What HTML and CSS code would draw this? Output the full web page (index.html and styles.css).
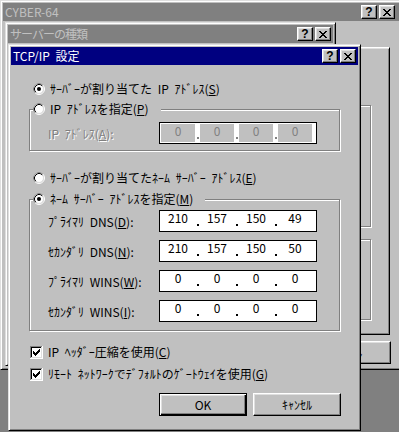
FILE: index.html
```html
<!DOCTYPE html>
<html lang="ja">
<head>
<meta charset="utf-8">
<title>TCP/IP 設定</title>
<link rel="stylesheet" href="styles.css">
</head>
<body>
<svg class="defs" aria-hidden="true">
  <symbol id="i-radio" viewBox="0 0 12 12">
    <circle cx="6" cy="6" r="5.5" fill="none" stroke="#fff"/>
    <path d="M2.11 9.89A5.5 5.5 0 0 1 9.89 2.11" fill="none" stroke="#808080"/>
    <circle cx="6" cy="6" r="4.5" fill="#fff" stroke="#dfdfdf"/>
    <path d="M2.82 9.18A4.5 4.5 0 0 1 9.18 2.82" fill="none" stroke="#000"/>
  </symbol>
  <symbol id="i-dot" viewBox="0 0 12 12"><circle cx="6" cy="6" r="2" fill="#000"/></symbol>
  <symbol id="i-chk" viewBox="0 0 13 13" shape-rendering="crispEdges">
    <rect width="13" height="13" fill="#fff"/>
    <path d="M0 0h12v1H1v11H0z" fill="#808080"/>
    <path d="M1 1h10v1H2v9H1z" fill="#000"/>
    <path d="M12 0h1v13H0v-1h12z" fill="#fff"/>
    <path d="M11 1h1v11H1v-1h10z" fill="#dfdfdf"/>
    <path d="M3 5h1v3H3zM4 6h1v3H4zM5 7h1v3H5zM6 6h1v3H6zM7 5h1v3H7zM8 4h1v3H8zM9 3h1v3H9z" fill="#000"/>
  </symbol>
  <symbol id="i-x" viewBox="0 0 8 7" shape-rendering="crispEdges">
    <path d="M0 0h2v1H0zM6 0h2v1H6zM1 1h2v1H1zM5 1h2v1H5zM2 2h4v1H2zM3 3h2v1H3zM2 4h4v1H2zM1 5h2v1H1zM5 5h2v1H5zM0 6h2v1H0zM6 6h2v1H6z" fill="#000"/>
  </symbol>
</svg>

<section class="win win-main">
  <div class="titlebar">
    <span class="title">CYBER-64</span>
    <div class="tbtns"><span class="tbtn">?</span><span class="tbtn"><svg class="xi"><use href="#i-x"/></svg></span></div>
  </div>
  <div class="main-body">
    <div class="sheet">
      <div class="etch sheet-g1"></div>
      <div class="etch sheet-g2"></div>
    </div>
    <button class="btn main-cancel">ｷｬﾝｾﾙ</button>
  </div>
</section>

<section class="win win-type">
  <div class="titlebar">
    <span class="title title-type">サーバーの種類</span>
    <div class="tbtns"><span class="tbtn">?</span><span class="tbtn"><svg class="xi"><use href="#i-x"/></svg></span></div>
  </div>
</section>

<section class="win win-tcp">
  <div class="titlebar active">
    <span class="title">TCP/IP 設定</span>
    <div class="tbtns"><span class="tbtn">?</span><span class="tbtn"><svg class="xi"><use href="#i-x"/></svg></span></div>
  </div>
  <div class="client">
    <div class="opt opt-1"><svg class="radio"><use href="#i-radio"/><use href="#i-dot"/></svg><span>ｻｰﾊﾞｰが割り当てた IP ｱﾄﾞﾚｽ(<u>S</u>)</span></div>

    <div class="group etch group-ip">
      <div class="legend"><svg class="radio"><use href="#i-radio"/></svg><span>IP ｱﾄﾞﾚｽを指定(<u>P</u>)</span></div>
      <div class="field-row">
        <span class="label off">IP ｱﾄﾞﾚｽ(<u>A</u>):</span>
        <div class="ip ip-off"><span class="oct">0</span><span class="dot"></span><span class="oct">0</span><span class="dot"></span><span class="oct">0</span><span class="dot"></span><span class="oct">0</span></div>
      </div>
    </div>

    <div class="opt opt-3"><svg class="radio"><use href="#i-radio"/></svg><span>ｻｰﾊﾞｰが割り当てたﾈｰﾑ ｻｰﾊﾞｰ ｱﾄﾞﾚｽ(<u>E</u>)</span></div>

    <div class="group etch group-ns">
      <div class="legend"><svg class="radio"><use href="#i-radio"/><use href="#i-dot"/></svg><span>ﾈｰﾑ ｻｰﾊﾞｰ ｱﾄﾞﾚｽを指定(<u>M</u>)</span></div>
      <div class="field-row">
        <span class="label">ﾌﾟﾗｲﾏﾘ DNS(<u>D</u>):</span>
        <div class="ip"><span class="oct">210</span><span class="dot"></span><span class="oct">157</span><span class="dot"></span><span class="oct">150</span><span class="dot"></span><span class="oct">49</span></div>
      </div>
      <div class="field-row">
        <span class="label">ｾｶﾝﾀﾞﾘ DNS(<u>N</u>):</span>
        <div class="ip"><span class="oct">210</span><span class="dot"></span><span class="oct">157</span><span class="dot"></span><span class="oct">150</span><span class="dot"></span><span class="oct">50</span></div>
      </div>
      <div class="field-row">
        <span class="label">ﾌﾟﾗｲﾏﾘ WINS(<u>W</u>):</span>
        <div class="ip"><span class="oct">0</span><span class="dot"></span><span class="oct">0</span><span class="dot"></span><span class="oct">0</span><span class="dot"></span><span class="oct">0</span></div>
      </div>
      <div class="field-row">
        <span class="label">ｾｶﾝﾀﾞﾘ WINS(<u>I</u>):</span>
        <div class="ip"><span class="oct">0</span><span class="dot"></span><span class="oct">0</span><span class="dot"></span><span class="oct">0</span><span class="dot"></span><span class="oct">0</span></div>
      </div>
    </div>

    <div class="chk-row chk-1"><svg class="chk"><use href="#i-chk"/></svg><span>IP ﾍｯﾀﾞｰ圧縮を使用(<u>C</u>)</span></div>
    <div class="chk-row chk-2"><svg class="chk"><use href="#i-chk"/></svg><span>ﾘﾓｰﾄ ﾈｯﾄﾜｰｸでﾃﾞﾌｫﾙﾄのｹﾞｰﾄｳｪｲを使用(<u>G</u>)</span></div>

    <div class="buttons">
      <button class="btn btn-default">OK</button>
      <button class="btn">ｷｬﾝｾﾙ</button>
    </div>
  </div>
</section>
</body>
</html>
```

FILE: styles.css
```css
* { box-sizing: border-box; }
html, body { margin: 0; padding: 0; }
body {
  position: relative;
  width: 399px;
  height: 432px;
  overflow: hidden;
  background: #808080;
  font: 12px "Noto Sans CJK JP", "Noto Sans", sans-serif;
  word-spacing: 3px;
  color: #000;
}
.defs { position: absolute; width: 0; height: 0; overflow: hidden; }

u { text-decoration: underline; text-underline-offset: 1px; text-decoration-thickness: 1px; }

/* windows */
.win {
  position: absolute;
  display: flex;
  flex-direction: column;
  background: #c0c0c0;
  border: 1px solid;
  border-color: #dfdfdf #000 #000 #dfdfdf;
  box-shadow: inset 1px 1px #fff, inset -1px -1px #808080;
  padding: 2px;
}
.win-main { left: 0; top: 0; width: 404px; height: 370px; }
.win-type { left: 5px; top: 22px; width: 331px; height: 344px; }
.win-tcp { left: 8px; top: 44px; width: 353px; height: 387px; }

.titlebar {
  flex: none;
  height: 18px;
  display: flex;
  align-items: center;
  padding-left: 2px;
  background: #808080;
  color: #c0c0c0;
  white-space: nowrap;
}
.titlebar.active { background: #000080; color: #fff; }
.title { line-height: 16px; }
.title-type { letter-spacing: -1px; }
.tbtns { margin-left: auto; margin-right: 2px; display: flex; gap: 2px; }
.win-main .tbtns { margin-right: 6px; }
.tbtn {
  width: 16px;
  height: 14px;
  display: flex;
  align-items: center;
  justify-content: center;
  background: #c0c0c0;
  border: 1px solid;
  border-color: #fff #000 #000 #fff;
  box-shadow: inset -1px -1px #808080, inset 1px 1px #dfdfdf;
  color: #000;
  font: bold 12px/12px "Liberation Sans", sans-serif;
}
.xi { display: block; width: 8px; height: 7px; }

/* background window body */
.main-body { flex: 1; display: flex; flex-direction: column; }
.sheet {
  margin: 26px 11px 0 5px;
  height: 288px;
  border: 1px solid;
  border-color: #fff #000 #000 #fff;
  box-shadow: inset 1px 1px #dfdfdf, inset -1px -1px #808080;
  padding: 57px 18px 0 0;
}
.etch {
  border: 1px solid #808080;
  box-shadow: inset 1px 1px #fff, 1px 1px #fff;
}
.sheet-g1 { height: 122px; }
.sheet-g2 { margin-top: 12px; height: 81px; }
.main-cancel { align-self: flex-end; margin: 6px 10px 0 0; width: 62px; }

/* buttons */
.btn {
  height: 23px;
  width: 88px;
  padding: 0;
  background: #c0c0c0;
  border: 1px solid;
  border-color: #fff #000 #000 #fff;
  box-shadow: inset -1px -1px #808080, inset 1px 1px #dfdfdf;
  font: 12px "Noto Sans CJK JP", sans-serif;
  color: #000;
  line-height: 19px;
}
.btn-default {
  border-color: #000;
  box-shadow: inset 1px 1px #fff, inset -1px -1px #000, inset -2px -2px #808080, inset 2px 2px #dfdfdf;
}

/* dialog client */
.client { flex: 1; display: flex; flex-direction: column; padding: 0 18px; }
.opt, .chk-row, .legend {
  display: flex;
  align-items: center;
  gap: 5px;
  height: 16px;
  line-height: 16px;
  white-space: nowrap;
}
.opt { padding-left: 4px; }
.opt-1 { margin-top: 16px; }
.opt-3 { margin-top: 19px; }
.radio { display: block; flex: none; width: 12px; height: 12px; }
.chk { display: block; flex: none; width: 13px; height: 13px; }

.group { position: relative; }
.group-ip { margin-top: 12px; height: 42px; padding: 12px 0 0 18px; }
.group-ns {
  margin-top: 13px;
  height: 132px;
  padding: 10px 0 0 18px;
  display: flex;
  flex-direction: column;
  gap: 8px;
}
.legend {
  position: absolute;
  left: 3px;
  top: -9px;
  padding-right: 12px;
  background: #c0c0c0;
}

.field-row { display: flex; align-items: center; height: 22px; }
.label { flex: none; width: 111px; white-space: nowrap; }
.label.off { color: #808080; text-shadow: 1px 1px 0 #fff; }

.ip {
  flex: none;
  display: flex;
  width: 158px;
  height: 22px;
  padding-left: 1px;
  border: 1px solid #000;
  background: #fff;
  word-spacing: 0;
}
.oct { flex: none; width: 34px; text-align: center; line-height: 14px; }
.dot { flex: none; width: 5px; position: relative; }
.dot::after {
  content: "";
  position: absolute;
  left: 2px;
  top: 13px;
  width: 2px;
  height: 2px;
  background: #000;
}
.ip-off .oct { margin: 1px 0; background: #c0c0c0; color: #808080; line-height: 13px; }
.ip-off .dot::after { top: 14px; background: #808080; }

.chk-row { padding-left: 1px; }
.chk-1 { margin-top: 13px; }
.chk-2 { margin-top: 6px; }

.buttons { margin-top: 11px; margin-right: -1px; display: flex; justify-content: flex-end; gap: 6px; }
```
